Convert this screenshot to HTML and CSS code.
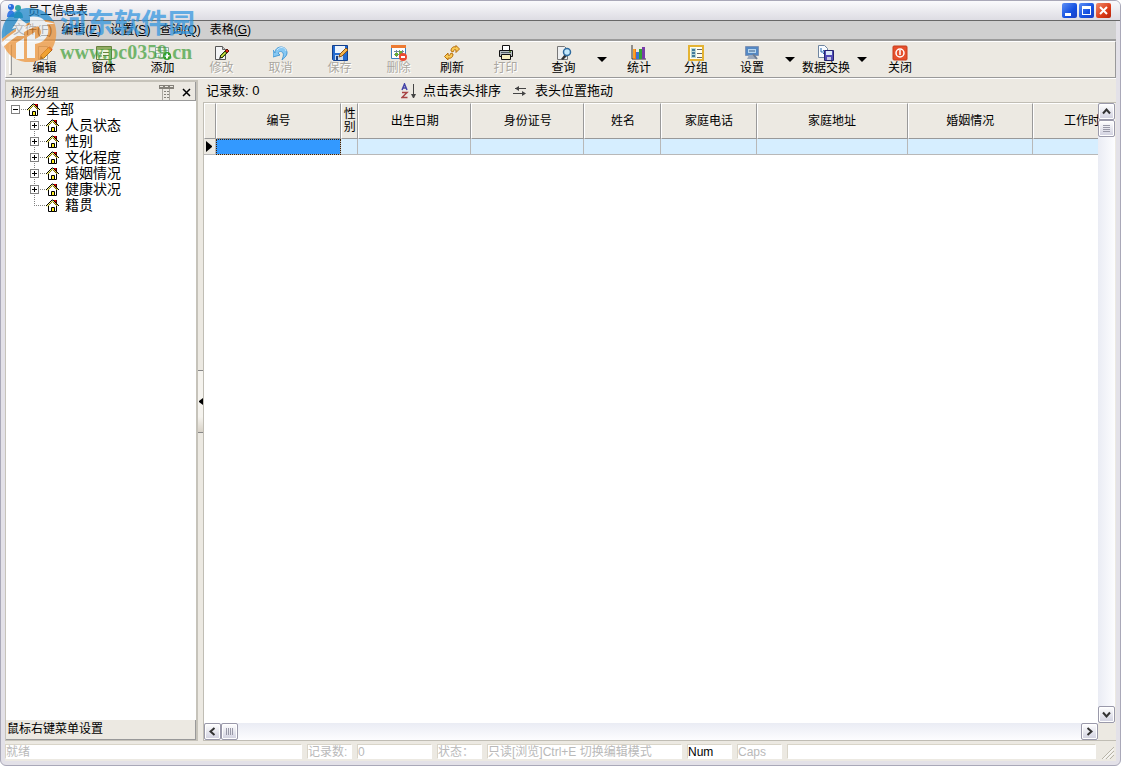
FILE: index.html
```html
<!DOCTYPE html>
<html lang="zh-CN">
<head>
<meta charset="utf-8">
<title>员工信息表</title>
<link rel="stylesheet" href="styles.css">
</head>
<body>
<svg class="defs" width="0" height="0" aria-hidden="true">
  <symbol id="house" viewBox="0 0 13 13">
    <path d="M2.500 6.500l4-4 4 4v6h-8z" fill="#fff" stroke="#000"/>
    <path d="M8 1h3v5L8 3z" fill="#e00000"/><path d="M10 1h1v5h-1z" fill="#400"/>
    <path d="M0 7L6 1h1l6 6" fill="none" stroke="#000"/>
    <path d="M1 7.500L6.500 2l5 5" fill="none" stroke="#f8ec20"/>
    <path d="M5.500 8.500h3v4h-3z" fill="#ffee20" stroke="#000"/>
  </symbol>
  <symbol id="page-pen" viewBox="0 0 16 16">
    <path d="M1.500 1.500h7l3 3v10h-10z" fill="#f4f5f6" stroke="#555"/><path d="M8.500 1.500v3h3" fill="#ccc" stroke="#666"/>
    <path d="M5 14l1-3 2 2z" fill="#222"/><path d="M6 11l6-6 2 2-6 6z" fill="#7dbb28" stroke="#2a3a10"/><path d="M11 6l2-2 2 2-2 2z" fill="#d73118" stroke="#601008"/><path d="M7 12l4-4" stroke="#f0d34c"/>
  </symbol>
</svg>
<div class="window">
  <header class="titlebar">
    <svg class="app-icon" viewBox="0 0 16 16"><circle cx="4" cy="4" r="3" fill="#2b6dde"/><path d="M0 14c0-9 8-9 8 0z" fill="#3d7ae6"/><circle cx="11" cy="5" r="3" fill="#35a9a0"/><path d="M7 15c0-9 9-9 9 0z" fill="#43a999"/><circle cx="3" cy="3" r="1" fill="#bfdcff"/></svg>
    <h1 class="title">员工信息表</h1>
    <div class="controls">
      <button class="ctl" aria-label="最小化"><svg viewBox="0 0 15 15"><path d="M3 10h6v3H3z" fill="#fff"/></svg></button>
      <button class="ctl" aria-label="最大化"><svg viewBox="0 0 15 15"><path d="M3 3h9v9H3zM4 6v5h7V6z" fill="#fff" fill-rule="evenodd"/></svg></button>
      <button class="ctl ctl-close" aria-label="关闭窗口"><svg viewBox="0 0 15 15"><path d="M4 4l7 7M11 4l-7 7" stroke="#fff" stroke-width="2"/></svg></button>
    </div>
  </header>
  <nav class="menubar">
    <button class="menu">文件(<u>F</u>)</button><button class="menu">编辑(<u>E</u>)</button><button class="menu">设置(<u>S</u>)</button><button class="menu">查询(<u>Q</u>)</button><button class="menu">表格(<u>G</u>)</button>
  </nav>
  <div class="toolbar">
    <span class="handle"></span>
    <button class="tool"><svg viewBox="0 0 16 16"><path d="M1.500 1.500h9v13h-9z" fill="#f5f3ea" stroke="#aaa"/><path d="M3 14l1-4 8-8 3 3-8 8z" fill="#f7c52e" stroke="#a56f10"/><path d="M12 2l3 3" stroke="#d34c24" stroke-width="2"/><path d="M3 14l1-3 2 2z" fill="#222"/></svg>编辑</button>
    <button class="tool"><svg viewBox="0 0 16 16"><path d="M.5 1.500h15v13H.5z" fill="#eef3df" stroke="#67823e"/><path d="M1 2h14v3H1z" fill="#91ac62"/><path d="M3 8h3M3 11h3M7 7.500h6M7 10.500h6" stroke="#67823e"/></svg>窗体</button>
    <button class="tool"><svg viewBox="0 0 16 16"><path d="M.5 2.500h13v10H.5z" fill="#edf4ef" stroke="#8ca697"/><path d="M1 5.500h12M1 8.500h12M5.500 3v9" stroke="#a7bdaf"/><circle cx="12" cy="11" r="4" fill="#2d9c24"/><path d="M12 8.500v5M9.500 11h5" stroke="#fff" stroke-width="2"/></svg>添加</button>
    <button class="tool" disabled><svg><use href="#page-pen"/></svg>修改</button>
    <button class="tool" disabled><svg viewBox="0 0 16 16"><path d="M2 8c0-8 12-8 12 0 0 3-3 5-5 7 1-3 2-5 1-7-1-2-4-2-5 0l2 2-7 2V5z" fill="#86c8f3" stroke="#4c9cd6"/><path d="M4 5c3-4 8-3 9 1" fill="none" stroke="#cceaff"/></svg>取消</button>
    <button class="tool" disabled><svg viewBox="0 0 16 16"><path d="M.5.5h15v15h-14l-1-1z" fill="#246bcf" stroke="#123f8d"/><path d="M3 1h10v7H3z" fill="#eef5fd"/><path d="M3 10h8v5H3z" fill="#c8d9ee"/><path d="M7 12l1-3 6-6 2 2-6 6z" fill="#f3b54e" stroke="#8e5317"/><path d="M4 11h2v4H4z" fill="#163d82"/></svg>保存</button>
    <button class="tool" disabled><svg viewBox="0 0 16 16"><path d="M.5.5h14v13H.5z" fill="#fff" stroke="#3e7fbf"/><path d="M0 0h15v3H0z" fill="#ed7b32"/><path d="M3 6.500h10M3 9.500h8M5.500 5v7M8.500 5v7M11.500 5v5" stroke="#72889e"/><path d="M4 8h3v3H4zM8 6h3v3H8z" fill="#67ad30"/><circle cx="12" cy="12" r="4" fill="#ea4932"/><path d="M10 12h4" stroke="#fff" stroke-width="2"/></svg>删除</button>
    <button class="tool narrow"><svg viewBox="0 0 16 16"><path d="M7 6c0-3 2-5 5-4V.5L15.500 4 12 7.500V5c-2-1-2 0-3 2zM9 9c0 3-2 5-5 4v2L.5 11.500 4 8v2c2 1 2 0 3-2z" fill="#f9ca55" stroke="#b66e0c"/></svg>刷新</button>
    <button class="tool" disabled><svg viewBox="0 0 16 16"><path d="M4.500.5h7v5h-7z" fill="#fff" stroke="#111"/><path d="M1.500 5.500h13v6h-13z" fill="#b9c0c1" stroke="#111"/><path d="M3 7.500h10" stroke="#505c62"/><path d="M3.500 9.500h9v5h-9z" fill="#f6efbf" stroke="#111"/><path d="M11 6h2v1h-2z" fill="#6ba330"/></svg>打印</button>
    <button class="tool query"><svg viewBox="0 0 16 16"><path d="M1.500 1.500h7l3 3v10h-10z" fill="#eef0f1" stroke="#777"/><path d="M5 14l4-5 2 2-4 4z" fill="#333"/><circle cx="11" cy="7" r="3.500" fill="#c4e9fc" stroke="#2e6a9e" stroke-width="1.500"/></svg>查询</button>
    <button class="drop" aria-label="查询选项"></button>
    <button class="tool stats"><svg viewBox="0 0 16 16"><path d="M1 0v14h14" fill="none" stroke="#333"/><path d="M2 4h3v10H2z" fill="#f27618"/><path d="M5 7h3v7H5z" fill="#3a74d4"/><path d="M8 4h3v10H8z" fill="#34a234"/><path d="M11 2h3v12h-3z" fill="#783ca8"/><path d="M3 4v9" stroke="#ffd13a"/></svg>统计</button>
    <button class="tool wide"><svg viewBox="0 0 16 16"><path d="M1 1h14v14H1z" fill="#fffef0" stroke="#e4b332" stroke-width="2"/><path d="M3 3h5v10H3z" fill="#b8d8d5"/><path d="M4 4h3v2H4zM4 7h3v2H4zM4 10h3v2H4z" fill="#457c9b"/><path d="M9 4.500h5M9 8.500h5M9 12.500h5" stroke="#666"/></svg>分组</button>
    <button class="tool settings"><svg viewBox="0 0 16 16"><path d="M1.500 1.500h13v9h-13z" fill="#5488c3" stroke="#8094b5"/><path d="M4 4h8v4H4z" fill="#b7d6ef"/><path d="M5 6h6" stroke="#3c5f87"/><path d="M5 10h6l2 4H3z" fill="#9ba8bb"/><path d="M9 9l4 5" stroke="#6f7d91" stroke-width="2"/></svg>设置</button>
    <button class="drop drop-mid" aria-label="设置选项"></button>
    <button class="tool narrow"><svg viewBox="0 0 16 16"><path d="M.5.5h6l3 3v9h-9z" fill="#f8fbff" stroke="#7086a0"/><path d="M3 3v4h4M5 5l2 2-2 2" fill="none" stroke="#276bb3"/><path d="M6.500 5.500h9v10h-9z" fill="#514ab6" stroke="#25246f"/><path d="M8 6h6v4H8z" fill="#dce9f8"/><path d="M9 12h4v3H9z" fill="#c8c8e0"/></svg>数据交换</button>
    <button class="drop drop-mid" aria-label="数据交换选项"></button>
    <button class="tool settings"><svg viewBox="0 0 16 16"><rect x="1" y="1" width="14" height="14" rx="1" fill="#e64f2c" stroke="#c63c1b"/><circle cx="8" cy="8" r="4" fill="none" stroke="#fff" stroke-width="1.500"/><path d="M8 5v5" stroke="#fff" stroke-width="1.500"/></svg>关闭</button>
  </div>
  <main class="content">
    <aside class="side">
      <div class="side-head"><span>树形分组</span>
        <button class="plain" aria-label="树形设置"><svg width="15" height="15" viewBox="0 0 15 15"><path d="M0 0h15v4H0z" fill="#85827a"/><path d="M1 1.500h3M6 1.500h3M11 1.500h3" stroke="#ece9e2"/><path d="M3.500 4v11M10.500 4v11" stroke="#aaa79f"/><path d="M5 6.500h2M8 6.500h2M5 9.500h2M8 9.500h2M5 12.500h2M8 12.500h2" stroke="#85827a"/></svg></button>
        <button class="plain close-side" aria-label="关闭面板"><svg width="9" height="9" viewBox="0 0 9 9"><path d="M1 1l7 7M8 1L1 8" stroke="#000" stroke-width="1.500"/></svg></button>
      </div>
      <ul class="tree">
        <li class="node"><button class="toggle" aria-label="折叠"></button><i class="stub"></i><svg><use href="#house"/></svg><span>全部</span>
        </li>
        <li><ul class="branch">
          <li class="node"><button class="toggle plus" aria-label="展开"></button><i class="stub"></i><svg><use href="#house"/></svg><span>人员状态</span></li>
          <li class="node"><button class="toggle plus" aria-label="展开"></button><i class="stub"></i><svg><use href="#house"/></svg><span>性别</span></li>
          <li class="node"><button class="toggle plus" aria-label="展开"></button><i class="stub"></i><svg><use href="#house"/></svg><span>文化程度</span></li>
          <li class="node"><button class="toggle plus" aria-label="展开"></button><i class="stub"></i><svg><use href="#house"/></svg><span>婚姻情况</span></li>
          <li class="node"><button class="toggle plus" aria-label="展开"></button><i class="stub"></i><svg><use href="#house"/></svg><span>健康状况</span></li>
          <li class="node"><i class="elbow"></i><svg><use href="#house"/></svg><span>籍贯</span></li>
        </ul></li>
      </ul>
      <div class="side-foot">鼠标右键菜单设置</div>
    </aside>
    <div class="splitter"><button class="grab" aria-label="收起面板"><svg width="4" height="7" viewBox="0 0 4 7"><path d="M4 0v7L0 4V3z"/></svg></button></div>
    <section class="work">
      <div class="info">
        <span class="count">记录数: 0</span>
        <svg width="16" height="16" viewBox="0 0 16 16"><path d="M1 7l2.500-6L6 7M2 5h3" fill="none" stroke="#4545a8" stroke-width="1.500"/><path d="M1 9.500h5l-5 5h5.500" fill="none" stroke="#a84444" stroke-width="1.500"/><path d="M12.500 1v12" stroke="#444"/><path d="M10 11h5l-2 4h-1z" fill="#444"/></svg>
        <span class="sort">点击表头排序</span>
        <svg width="14" height="12" viewBox="0 0 14 12"><path d="M2 3.500h11M0 8.500h11" stroke="#444"/><path d="M2 3.500L6 1v5zM13 8.500L9 6v5z" fill="#444"/></svg>
        <span class="drag">表头位置拖动</span>
      </div>
      <div class="grid">
        <div class="grid-view">
          <table class="records">
            <colgroup><col class="c-mark"><col class="c-id"><col class="c-sex"><col class="c-date"><col class="c-date"><col class="c-name"><col class="c-tel"><col class="c-addr"><col class="c-id"><col class="c-work"></colgroup>
            <thead><tr><th></th><th>编号</th><th class="tight">性<br>别</th><th>出生日期</th><th>身份证号</th><th>姓名</th><th>家庭电话</th><th>家庭地址</th><th>婚姻情况</th><th>工作时间</th></tr></thead>
            <tbody><tr><td class="mark"><svg width="6" height="11" viewBox="0 0 6 11"><path d="M0 0l6 5v1l-6 5z"/></svg></td><td class="current"></td><td></td><td></td><td></td><td></td><td></td><td></td><td></td><td></td></tr></tbody>
          </table>
        </div>
        <div class="vscroll">
          <button class="sb" aria-label="向上"><svg width="9" height="7" viewBox="0 0 9 7"><path d="M1 5.500l3.500-4 3.500 4" fill="none" stroke="#333" stroke-width="2"/></svg></button>
          <div class="thumb vthumb"></div>
          <button class="sb last" aria-label="向下"><svg width="9" height="7" viewBox="0 0 9 7"><path d="M1 1.500l3.500 4 3.500-4" fill="none" stroke="#333" stroke-width="2"/></svg></button>
        </div>
        <div class="hscroll">
          <button class="sb" aria-label="向左"><svg width="7" height="9" viewBox="0 0 7 9"><path d="M5.500 1l-4 3.500 4 3.500" fill="none" stroke="#333" stroke-width="2"/></svg></button>
          <div class="thumb hthumb"></div>
          <button class="sb last" aria-label="向右"><svg width="7" height="9" viewBox="0 0 7 9"><path d="M1.500 1l4 3.500-4 3.500" fill="none" stroke="#333" stroke-width="2"/></svg></button>
        </div>
      </div>
    </section>
  </main>
  <footer class="status">
    <span class="cell w-ready">就绪</span><span class="cell w-small">记录数:</span><span class="cell w-num">0</span><span class="cell w-small">状态：</span><span class="cell w-mode">只读[浏览]Ctrl+E 切换编辑模式</span><span class="cell w-small on">Num</span><span class="cell w-small">Caps</span><span class="cell w-rest"></span>
    <svg class="grip" width="12" height="12" viewBox="0 0 12 12"><path d="M0 12L12 0M4 12l8-8M8 12l4-4" stroke="#b8b4a8"/><path d="M1.500 12L12 1.500M5.500 12L12 5.500" stroke="#fff"/></svg>
  </footer>
  <div class="watermark">
    <svg width="57" height="54" viewBox="0 0 57 54"><path d="M1 31C-1 12 12 0 28 0c12 0 20 5 25 14C38 8 17 17 1 31z" fill="#1585cc"/><path d="M1 31C17 17 38 8 53 14c7 17-3 37-21 40C16 56 3 46 1 31z" fill="#ee9234"/><path d="M0 35C18 18 38 10 54 16 37 15 20 23 2 39z" fill="#fff"/><path d="M11 21l7-11 8 6-3 3v9h-8v-8zM15 35l8-5v21h-8zM29 9c22-4 25 25 5 27v14h-8V29l8-5v7c10-3 7-15-5-15z" fill="#f7fbfe"/></svg>
    <div class="wm-text"><span class="wm-name">河东软件园</span><span class="wm-url">www.pc0359.cn</span></div>
  </div>
</div>
</body>
</html>
```

FILE: styles.css
```css
* { box-sizing: border-box; }
body {
  margin: 0;
  background: #fff;
  color: #000;
  font: 12px/16px "Liberation Sans", "Noto Sans CJK SC", sans-serif;
}
button {
  margin: 0;
  padding: 0;
  border: 0;
  background: none;
  color: inherit;
  font: inherit;
}
svg { display: block; flex: none; }
ul { margin: 0; padding: 0; list-style: none; }
.defs { position: absolute; }

.window {
  position: relative;
  display: flex;
  flex-direction: column;
  height: 100vh;
  padding: 0 4px 4px;
  border: 1px solid #a9a8b8;
  border-radius: 6px;
  background: #e3e1e8;
  overflow: hidden;
}

.titlebar {
  display: flex;
  align-items: center;
  height: 20px;
  margin: 0 -4px;
  padding: 0 9px 0 6px;
  border-bottom: 1px solid #686868;
  background: linear-gradient(#fafafc, #dddce3);
}
.app-icon { width: 16px; height: 16px; }
.title { flex: 1; margin: 0 0 0 5px; font-size: 12px; font-weight: normal; }
.controls { display: flex; gap: 2px; }
.ctl {
  width: 15px;
  height: 15px;
  border-radius: 2px;
  background: linear-gradient(135deg, #5e8ff5, #124fe0 60%, #1c3fc4);
}
.ctl-close { background: linear-gradient(135deg, #f08a6c, #dc3c18 60%, #b8240c); }

.menubar {
  display: flex;
  height: 20px;
  padding: 0 4px;
  border-bottom: 2px solid #9b9b9b;
  background: #d0d0d0;
}
.menu { padding: 0 5px 0 4px; }

.toolbar {
  display: flex;
  align-items: stretch;
  height: 37px;
  border: 1px solid #fff;
  border-right-color: #999;
  border-bottom-color: #999;
  background: #ece9e2;
}
.handle {
  width: 3px;
  margin: 2px 3px;
  border: 1px solid #fff;
  border-right-color: #999;
  border-bottom-color: #999;
}
.tool {
  display: flex;
  flex-direction: column;
  align-items: center;
  width: 59px;
  padding-top: 3px;
  line-height: 14px;
  white-space: nowrap;
}
.tool svg { width: 16px; height: 16px; }
.tool:disabled { color: #aaa79f; text-shadow: 1px 1px #fff; }
.narrow { width: 48px; }
.query { width: 57px; }
.settings { width: 52px; }
.stats { width: 54px; }
.wide { width: 60px; }
.drop { width: 20px; }
.drop::before {
  content: "";
  display: block;
  width: 0;
  margin: 0 auto;
  border: 5px solid transparent;
  border-top-color: #000;
  border-bottom: 0;
}
.drop-mid { width: 24px; }

.content {
  display: flex;
  flex: 1;
  min-height: 0;
  padding-top: 1px;
  border-top: 1px solid #fff;
  background: #ece9e2;
}
.side {
  display: flex;
  flex-direction: column;
  width: 193px;
  border: 2px solid #c6c3ba;
  border-left-width: 1px;
  border-bottom-width: 1px;
  background: #fff;
}
.side-head {
  display: flex;
  align-items: center;
  height: 19px;
  padding: 3px 4px 0 5px;
  border-right: 1px solid #999;
  border-bottom: 1px solid #999;
  background: #ece9e2;
}
.side-head span { flex: 1; }
.close-side { margin-left: 8px; }
.tree { flex: 1; font-size: 14px; }
.node { display: flex; align-items: center; height: 16px; padding-left: 5px; line-height: 16px; }
.node svg { width: 13px; height: 13px; }
.node span { margin-left: 6px; }
.toggle {
  width: 9px;
  height: 9px;
  border: 1px solid #808080;
  background: linear-gradient(#000, #000) center / 5px 1px no-repeat, #fff;
}
.plus {
  background: linear-gradient(#000, #000) center / 5px 1px no-repeat, linear-gradient(#000, #000) center / 1px 5px no-repeat, #fff;
}
.stub { width: 5px; margin: 0 1px; border-top: 1px dotted #808080; }
.branch {
  padding-left: 19px;
  background: repeating-linear-gradient(#808080 0 1px, transparent 1px 2px) 28px 0 / 1px 88px no-repeat;
}
.elbow { width: 11px; margin: 0 1px 0 4px; border-top: 1px dotted #808080; }
.side-foot {
  padding: 1px 1px 2px;
  border-right: 1px solid #999;
  border-bottom: 1px solid #999;
  background: #ece9e2;
}

.splitter { display: flex; align-items: center; width: 5px; }
.grab {
  display: flex;
  align-items: center;
  justify-content: flex-end;
  width: 5px;
  height: 63px;
  margin-bottom: 18px;
  border-top: 1px solid #888;
  border-bottom: 1px solid #888;
  background: linear-gradient(#f5f3ee 75%, #d8d2c8);
}
.work { display: flex; flex: 1; flex-direction: column; min-width: 0; }
.info { display: flex; align-items: center; height: 22px; padding-left: 3px; }
.count { width: 195px; }
.info span { font-size: 13px; }
.count + svg { margin-right: 6px; }
.sort { margin-right: 12px; }
.drag { margin-left: 8px; }
.grid {
  display: grid;
  flex: 1;
  grid-template: minmax(0, 1fr) 17px / minmax(0, 1fr) 17px;
  padding-right: 1px;
  border: 1px solid #c0bdb4;
  border-width: 1px 0 1px 1px;
}
.grid-view { overflow: hidden; background: #fff; }
.records { width: 939px; table-layout: fixed; border-collapse: separate; border-spacing: 0; }
.c-mark { width: 12px; }
.c-id { width: 125px; }
.c-sex { width: 17px; }
.c-date { width: 113px; }
.c-name { width: 77px; }
.c-tel { width: 95px; }
.c-addr { width: 151px; }
.c-work { width: 110px; }
.records th {
  height: 36px;
  padding: 0;
  border: 1px solid #fff;
  border-right-color: #999;
  border-bottom-color: #999;
  background: #ece9e2;
  font-weight: normal;
}
.records .tight { line-height: 13px; }
.records td {
  height: 16px;
  padding: 0;
  border-right: 1px solid #b8b8b8;
  border-bottom: 1px solid #b8b8b8;
  background: #d6eeff;
}
.records .mark { padding-left: 2px; background: #ece9e2; }
.records .current { background: #3399ff; outline: 1px dotted #402000; outline-offset: -1px; }
.vscroll { display: flex; flex-direction: column; background: linear-gradient(90deg, #eaecf4, #fdfdff); }
.hscroll { display: flex; background: linear-gradient(#eaecf4, #fdfdff); }
.sb, .thumb {
  display: flex;
  align-items: center;
  justify-content: center;
  width: 17px;
  height: 17px;
  border: 1px solid #9a99aa;
  border-radius: 2px;
  background: linear-gradient(#fff, #d0d0df);
  box-shadow: inset 0 0 0 1px #fff;
}
.last { margin: auto 0 0; }
.hscroll .last { margin: 0 0 0 auto; }
.thumb::before { content: ""; width: 7px; height: 7px; }
.vthumb::before { background: repeating-linear-gradient(#9999a8 0 1px, transparent 1px 2px); }
.hthumb::before { background: repeating-linear-gradient(90deg, #9999a8 0 1px, transparent 1px 2px); }

.status {
  display: flex;
  gap: 6px;
  height: 20px;
  padding: 4px 2px 2px 1px;
  background: #ece9e2;
  color: #b9b9b9;
  line-height: 14px;
}
.cell {
  overflow: hidden;
  background: #fff;
  white-space: nowrap;
  box-shadow: -1px -1px #d9d5c9;
}
.on { color: #000; }
.w-ready { width: 296px; }
.w-small { width: 44px; }
.w-num { width: 74px; }
.w-mode { width: 194px; }
.w-rest { flex: 1; }
.grip { align-self: flex-end; }

/* Site mark printed over the top-left corner */
.watermark {
  position: absolute;
  top: 7px;
  left: 0;
  display: flex;
  opacity: 0.7;
  pointer-events: none;
}
.wm-text { display: flex; flex-direction: column; margin-left: 2px; white-space: nowrap; }
.wm-name { color: #2b93e0; font-size: 27px; font-weight: bold; line-height: 32px; }
.wm-url { color: #3f9f3a; font: bold 20px/24px "Liberation Serif", serif; }
```
